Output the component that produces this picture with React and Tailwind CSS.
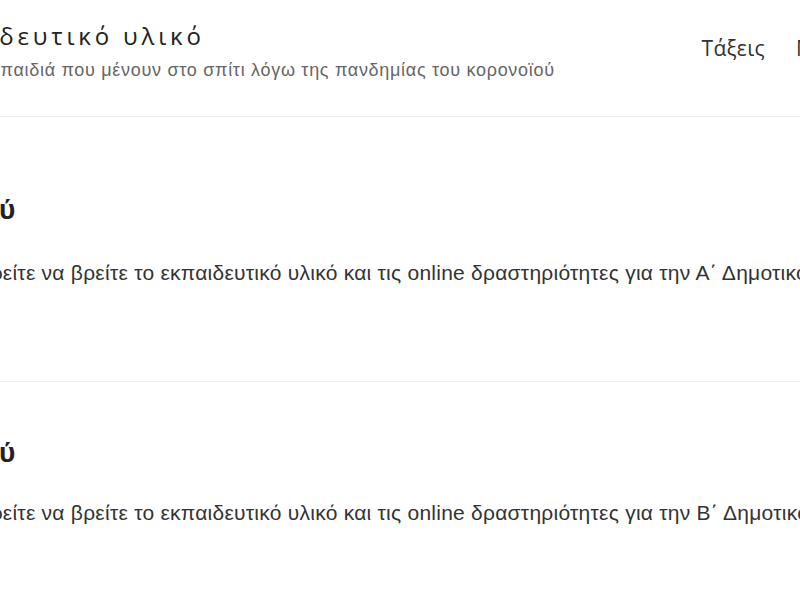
export default function App() {
  const classes = [
    { id: 'a', title: 'Α΄ Δημοτικού', grade: 'Α΄', top: 'pt-[75px]', gap: 'mt-[31px]' },
    { id: 'b', title: 'Β΄ Δημοτικού', grade: 'Β΄', top: 'pt-[53px]', gap: 'mt-[28px]' },
  ];

  return (
    <div className="w-[800px] h-[600px] overflow-hidden bg-white text-[#333]">
      <header className="h-[117px] border-b border-[#ececec] flex items-start">
        <div className="-ml-[84px] pt-[20px] shrink-0">
          <h1 className="font-['Open_Sans',sans-serif] text-[24px] leading-[32px] tracking-[3.8px] text-[#222] whitespace-nowrap">
            Εκπαιδευτικό υλικό
          </h1>
          <p className="mt-[7px] pl-[29px] font-['Liberation_Sans',Arial,sans-serif] text-[18px] leading-[22px] tracking-[0.7px] text-[#666] whitespace-nowrap">
            για τα παιδιά που μένουν στο σπίτι λόγω της πανδημίας του κορονοϊού
          </p>
        </div>
        <nav className="ml-auto -mr-[104px] pt-[33px] flex gap-[31px] font-['Open_Sans',sans-serif] text-[21px] leading-[30px] tracking-[0.3px] text-[#333] shrink-0">
          <a href="#">Τάξεις</a>
          <a href="#">Μαθήματα</a>
        </nav>
      </header>

      {classes.map((c) => (
        <section key={c.id} className={`h-[265px] border-b border-[#ececec] ${c.top}`}>
          <div className="-ml-[160px] whitespace-nowrap">
            <h2 className="font-['Liberation_Sans',Arial,sans-serif] font-bold text-[28px] leading-[36px] text-[#222]">
              {c.title}
            </h2>
            <p className={`${c.gap} ml-[63px] font-['Liberation_Sans',Arial,sans-serif] text-[21px] leading-[28px] tracking-[0.25px] text-[#333]`}>
              Εδώ μπορείτε να βρείτε το εκπαιδευτικό υλικό και τις online δραστηριότητες για την {c.grade} Δημοτικού
            </p>
          </div>
        </section>
      ))}
    </div>
  );
}
